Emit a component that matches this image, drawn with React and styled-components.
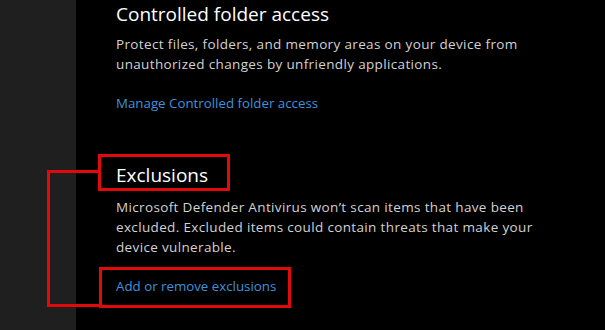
import React from 'react';
import styled, { createGlobalStyle, css } from 'styled-components';

const GlobalStyle = createGlobalStyle`
  html, body {
    margin: 0;
    padding: 0;
    background: #000;
  }
  body {
    font-family: "Open Sans", "Noto Sans", "Liberation Sans", sans-serif;
    -webkit-font-smoothing: antialiased;
  }
`;

const RED = '#e10a0a';

const
  Page = styled.div`
    display: flex;
    width: 605px;
    height: 330px;
    overflow: hidden;
    background: #000;
  `,
  Sidebar = styled.div`
    flex: 0 0 76px;
    background: #1f1f1f;
  `,
  Content = styled.main`
    flex: 1;
    padding-left: 40px;
    display: flex;
    flex-direction: column;
  `,
  Section = styled.section`
    position: relative;
    display: flex;
    flex-direction: column;
    align-items: flex-start;
    max-width: 430px;
    margin-top: ${props => props.$top || 0}px;
  `,
  Title = styled.h2`
    margin: 0;
    font-size: 19px;
    font-weight: 400;
    line-height: 28px;
    color: #fff;

    ${props => props.$boxed && css`
      line-height: 26px;
      margin-left: -18px;
      padding: 5px 19px 0 15px;
      border: 3px solid ${RED};
    `}
  `,
  Description = styled.p`
    margin: 6px 0 0;
    font-size: 13.5px;
    line-height: 20px;
    letter-spacing: 0.35px;
    color: #d2d2d2;
  `,
  Link = styled.a`
    margin-top: 19px;
    font-size: 13.3px;
    line-height: 20px;
    color: #3f92dc;
    text-decoration: none;
    cursor: pointer;

    ${props => props.$boxed && css`
      margin-top: 10px;
      margin-left: -17px;
      padding: 6px 12px 9px 14px;
      border: 3px solid ${RED};
    `}
  `,
  // connector line that ties the marked title to the marked link
  Bracket = styled.div`
    position: absolute;
    left: -69px;
    top: 16px;
    width: 52px;
    height: 137px;
    box-sizing: border-box;
    border: 3px solid ${RED};
    border-right: none;
    pointer-events: none;
  `;

const App = () => {
  return (
    <>
      <GlobalStyle />
      <Page>
        <Sidebar />
        <Content>
          <Section>
            <Title>Controlled folder access</Title>
            <Description>
              Protect files, folders, and memory areas on your device from unauthorized changes by unfriendly applications.
            </Description>
            <Link>Manage Controlled folder access</Link>
          </Section>
          <Section $top={41}>
            <Title $boxed>Exclusions</Title>
            <Description>
              Microsoft Defender Antivirus won’t scan items that have been excluded. Excluded items could contain threats that make your device vulnerable.
            </Description>
            <Link $boxed>Add or remove exclusions</Link>
            <Bracket />
          </Section>
        </Content>
      </Page>
    </>
  );
};

export default App;
